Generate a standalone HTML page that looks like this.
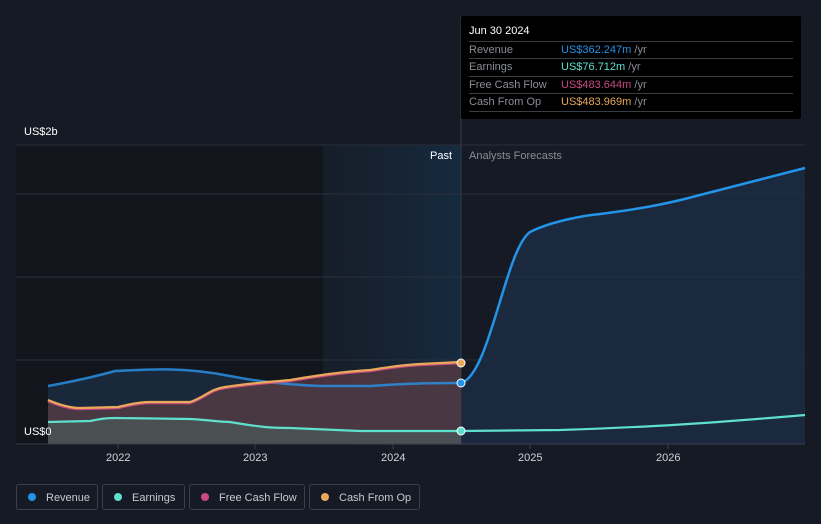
<!DOCTYPE html><html><head><style>
body{margin:0;width:821px;height:524px;background:#151a24;font-family:"Liberation Sans",sans-serif;overflow:hidden;position:relative}
.t{position:absolute;font-size:11px;color:#d0d3d8}
.tip{position:absolute;left:461px;top:16px;width:340px;height:103px;background:#000;border-radius:2px}
.tip .h{position:absolute;left:8px;top:9px;color:#fff;font-size:11px}
.row{position:absolute;left:8px;width:324px;border-top:1px solid #3a3d44;height:17px;font-size:11px;color:#8a8e95;line-height:17px}
.row b{font-weight:normal;position:absolute;left:92px}
.row i{font-style:normal;color:#8a8e95}
.leg{position:absolute;top:484px;height:26px;border:1px solid #3a3f4a;border-radius:3px;font-size:11px;color:#c8cbd0;line-height:26px;box-sizing:border-box}
.leg span{display:inline-block;width:8px;height:8px;border-radius:50%;margin:0 10px 0 11px;vertical-align:-0px}
</style></head><body>
<svg width="821" height="524" style="position:absolute;left:0;top:0">
<defs>
<linearGradient id="hb" x1="0" x2="1"><stop offset="0" stop-color="#1a2a3c" stop-opacity=".4"/><stop offset="1" stop-color="#173048" stop-opacity=".8"/></linearGradient>
</defs>
<rect x="16" y="145" width="445" height="300" fill="#12151c"/>
<rect x="323" y="145" width="138" height="300" fill="url(#hb)"/>
<g stroke="#2a2f3a" stroke-width="1">
<line x1="16" y1="145" x2="805" y2="145"/><line x1="16" y1="194" x2="805" y2="194"/><line x1="16" y1="277" x2="805" y2="277"/><line x1="16" y1="360" x2="805" y2="360"/>
</g>
<line x1="461" y1="16" x2="461" y2="444" stroke="#2f3d4e"/>
<path d="M461,383 C490,375 505,250 530,232 C550,222 580,216 600,214 C630,210 660,206 700,195 L805,168 L805,444 L461,444Z" fill="#1c3048" opacity=".7"/>
<path d="M48,386 C70,382 90,378 115,371 C150,369 185,367 230,376 C260,382 300,386 330,386 L370,386 C400,384 420,383 461,383 L461,444 L48,444Z" fill="#1b2e44" opacity=".8"/>
<path d="M48,401 C60,406 70,409 80,409 L118,408 C130,405 140,403 150,403 L190,403 C205,398 210,390 225,388 C250,384 270,383 290,381 C320,376 340,373 370,371 C390,368 400,366 420,365 L461,363 L461,444 L48,444Z" fill="#5a3c45" opacity=".75"/>
<path d="M48,422 L90,421 C100,419 105,418 115,418 L190,419 C210,420 220,422 230,422 C260,427 270,428 290,428 L360,431 L461,431 L461,444 L48,444Z" fill="#4b5a5a" opacity=".7"/>
<line x1="16" y1="444" x2="805" y2="444" stroke="#3a3f4a"/>
<path d="M48,386 C70,382 90,378 115,371 C150,369 185,367 230,376 C260,382 300,386 330,386 L370,386 C400,384 420,383 461,383" fill="none" stroke="#2a8ee0" stroke-width="2.5" opacity=".85"/>
<path d="M461,383 C490,375 505,250 530,232 C550,222 580,216 600,214 C630,210 660,206 700,195 L805,168" fill="none" stroke="#2394e8" stroke-width="2.5"/>
<path d="M48,401 C60,406 70,409 80,409 L118,408 C130,405 140,403 150,403 L190,403 C205,398 210,390 225,388 C250,384 270,383 290,381 C320,376 340,373 370,371 C390,368 400,366 420,365 L461,363" fill="none" stroke="#c84a80" stroke-width="2.5"/>
<path d="M48,400 C60,405 70,408 80,408 L118,407 C130,404 140,402 150,402 L190,402 C205,397 210,389 225,387 C250,383 270,382 290,380 C320,375 340,372 370,370 C390,367 400,365 420,364 L461,362" fill="none" stroke="#e8a95a" stroke-width="2.2"/>
<path d="M48,422 L90,421 C100,419 105,418 115,418 L190,419 C210,420 220,422 230,422 C260,427 270,428 290,428 L360,431 L461,431 L560,430 C650,427 700,424 805,415" fill="none" stroke="#5ee0cc" stroke-width="2.2"/>
<circle cx="461" cy="363" r="4" fill="#e8a95a" stroke="#fff" stroke-width="1"/>
<circle cx="461" cy="383" r="4" fill="#2394e8" stroke="#fff" stroke-width="1"/>
<circle cx="461" cy="431" r="4" fill="#5ee0cc" stroke="#fff" stroke-width="1"/>
<g stroke="#3a3f4a"><line x1="118" y1="444" x2="118" y2="449"/><line x1="255" y1="444" x2="255" y2="449"/><line x1="393" y1="444" x2="393" y2="449"/><line x1="530" y1="444" x2="530" y2="449"/><line x1="668" y1="444" x2="668" y2="449"/></g>
</svg>
<div class="t" style="left:24px;top:126px;color:#fff">US$2b</div>
<div class="t" style="left:24px;top:426px;color:#fff">US$0</div>
<div class="t" style="left:430px;top:150px;color:#fff">Past</div>
<div class="t" style="left:469px;top:150px;color:#8a8e95">Analysts Forecasts</div>
<div class="t" style="left:106px;top:452px">2022</div>
<div class="t" style="left:243px;top:452px">2023</div>
<div class="t" style="left:381px;top:452px">2024</div>
<div class="t" style="left:518px;top:452px">2025</div>
<div class="t" style="left:656px;top:452px">2026</div>
<div class="tip"><div class="h">Jun 30 2024</div>
<div class="row" style="top:25px">Revenue<b style="color:#2394e8">US$362.247m <i>/yr</i></b></div>
<div class="row" style="top:42px">Earnings<b style="color:#5ee0cc">US$76.712m <i>/yr</i></b></div>
<div class="row" style="top:60px">Free Cash Flow<b style="color:#c84a80">US$483.644m <i>/yr</i></b></div>
<div class="row" style="top:77px">Cash From Op<b style="color:#e8a95a">US$483.969m <i>/yr</i></b></div>
<div class="row" style="top:95px;height:0"></div>
</div>
<div class="leg" style="left:16px;width:82px"><span style="background:#2394e8"></span>Revenue</div>
<div class="leg" style="left:102px;width:83px"><span style="background:#5ee0cc"></span>Earnings</div>
<div class="leg" style="left:189px;width:116px"><span style="background:#c84a80"></span>Free Cash Flow</div>
<div class="leg" style="left:309px;width:111px"><span style="background:#e8a95a"></span>Cash From Op</div>
</body></html>
